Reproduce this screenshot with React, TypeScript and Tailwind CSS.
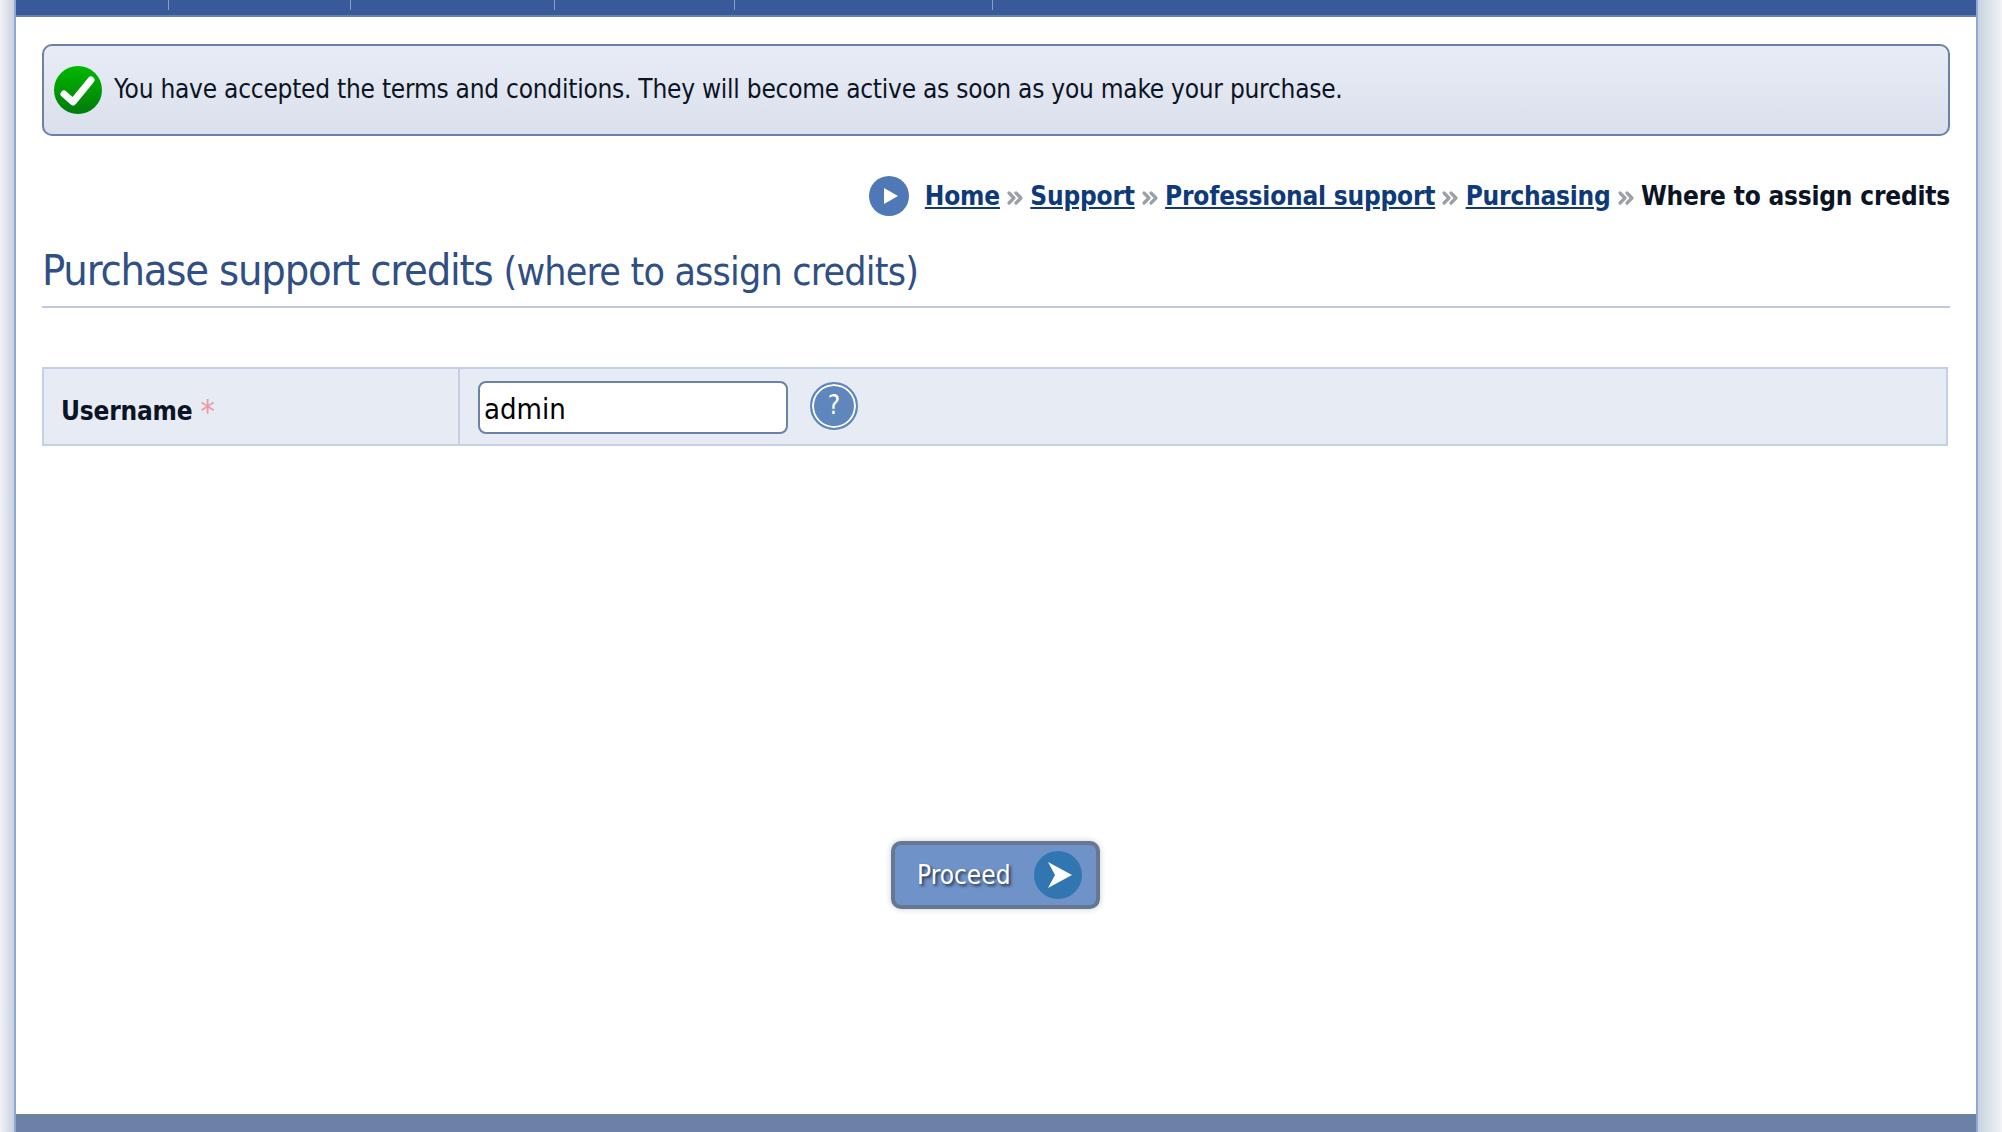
import { ChevronsRight } from "lucide-react";

const crumbs = ["Home", "Support", "Professional support", "Purchasing"];
const tabEdges = [153, 182, 204, 180, 258];

function Sep() {
  return <ChevronsRight className="mx-[3.2px] mt-[3px] h-[24px] w-[24px] text-[#9a9fa8]" strokeWidth={3.2} />;
}

export default function App() {
  return (
    <div className="flex h-[1132px] overflow-hidden bg-white font-['DejaVu_Sans_Condensed','DejaVu_Sans',sans-serif] text-[#0b1424]">
      <div className="w-[14px] shrink-0 bg-gradient-to-r from-[#f1f3f7] to-[#c9d2e0]" />
      <div className="flex min-w-0 flex-1 flex-col border-x-2 border-[#8fa8cf]">
        <div className="flex h-[17px] shrink-0 border-b-2 border-[#6b82a6] bg-[#38599a]">
          {tabEdges.map((w, i) => (
            <div key={i} className="h-[10px] border-r border-[#8b9dc0]" style={{ width: w }} />
          ))}
        </div>

        <main className="flex flex-1 flex-col px-[26px] pt-[27px]">
          <div className="flex h-[92px] items-center rounded-[10px] border-2 border-[#6b82a6] bg-gradient-to-b from-[#e8ecf5] to-[#dae0ec] pl-[10px]">
            <svg viewBox="0 0 48 48" className="h-[48px] w-[48px] shrink-0">
              <defs>
                <linearGradient id="ok" x1="0" y1="0" x2="0" y2="1">
                  <stop offset="0" stopColor="#00b900" />
                  <stop offset="1" stopColor="#007a0c" />
                </linearGradient>
              </defs>
              <circle cx="24" cy="24" r="24" fill="url(#ok)" />
              <path d="M10 28l9 8L37 14" fill="none" stroke="#fff" strokeWidth="7" strokeLinecap="round" strokeLinejoin="round" />
            </svg>
            <p className="mb-[2px] ml-[12px] text-[26px] leading-none tracking-[-0.24px]">
              You have accepted the terms and conditions. They will become active as soon as you make your purchase.
            </p>
          </div>

          <nav className="mt-[40px] flex h-[40px] items-center justify-end text-[26px] font-bold tracking-[-0.2px]">
            <svg viewBox="0 0 40 40" className="mr-[16px] h-[40px] w-[40px]">
              <circle cx="20" cy="20" r="20" fill="#4f78b6" />
              <path d="M15 12l14 8-14 8z" fill="#fff" />
            </svg>
            {crumbs.map((c) => (
              <span key={c} className="flex items-center">
                <a href="#" className="text-[#0f3a7a] underline">{c}</a>
                <Sep />
              </span>
            ))}
            <span>Where to assign credits</span>
          </nav>

          <h1 className="mt-[29px] h-[63px] border-b-2 border-[#bccbe3] text-[43px] leading-[50px] tracking-[-1.2px] text-[#2f4f85]">
            Purchase support credits <span className="text-[39px] tracking-[-0.8px]">(where to assign credits)</span>
          </h1>

          <div className="mr-[2px] mt-[59px] flex h-[79px] border-2 border-[#c3d0e5] bg-[#e6ebf4]">
            <div className="flex w-[416px] items-center gap-[8px] border-r-2 border-[#c3d0e5] pl-[17px] pt-[9px] text-[26px] font-bold tracking-[-0.2px]">
              Username <span className="text-[32px] font-normal text-[#ea9aa6]">*</span>
            </div>
            <div className="flex items-center pl-[18px]">
              <input
                readOnly
                value="admin"
                className="mt-[2px] h-[53px] w-[310px] rounded-[8px] border-2 border-[#6b82a6] bg-white px-[4px] pt-[3px] text-[29px] text-black outline-none"
              />
              <div className="mb-[2px] ml-[22px] flex h-[48px] w-[48px] items-center justify-center rounded-full border-2 border-[#5f86bd] bg-[#5f86bd] text-[26px] font-light text-white ring-2 ring-inset ring-white">
                ?
              </div>
            </div>
          </div>

          <div className="mt-[395px] flex justify-center">
            <button className="ml-[-1px] flex h-[68px] w-[209px] items-center justify-between rounded-[10px] border-[4px] border-[#67778f] bg-[#6f92c8] pl-[22px] pr-[14px] text-[26px] text-white shadow-[0_0_6px_#c5cdda] [text-shadow:2px_2px_3px_#25344f]">
              Proceed
              <svg viewBox="0 0 48 48" className="h-[48px] w-[48px]">
                <circle cx="24" cy="24" r="24" fill="#3276b1" />
                <path d="M14 11l24 13-24 13 7-13z" fill="#fff" />
              </svg>
            </button>
          </div>
        </main>

        <div className="h-[18px] shrink-0 bg-[#6b82a6]" />
      </div>
      <div className="w-[24px] shrink-0 bg-gradient-to-l from-[#f1f3f7] to-[#c9d2e0]" />
    </div>
  );
}
